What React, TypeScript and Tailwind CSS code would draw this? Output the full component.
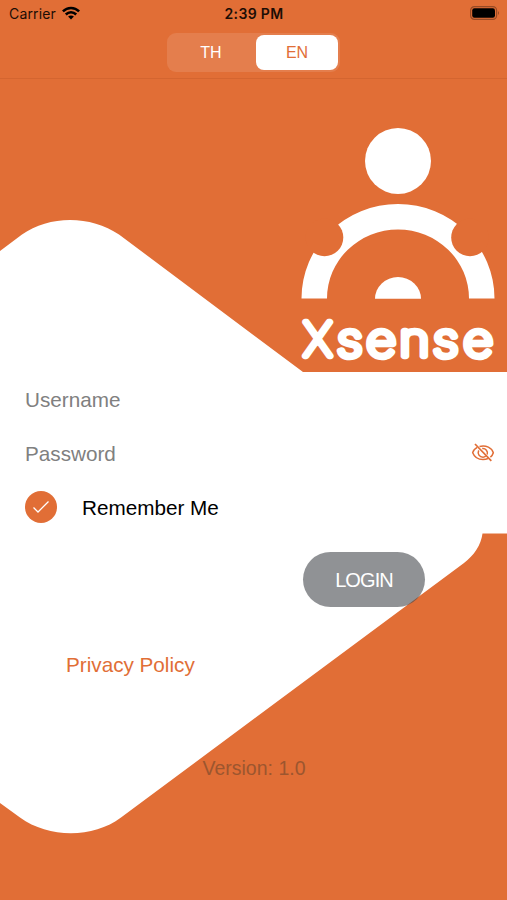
import { useState } from 'react';

type Language = 'TH' | 'EN';

const StatusBar: React.FC = () => {
  return (
    <div className="grid h-[27px] grid-cols-3 items-center pl-[9px] pr-[7px] text-[14px] leading-none text-[#1c0d05]">
      <div className="flex items-center gap-[6px]">
        <span className="font-['Inter',sans-serif] tracking-[0.15px]">Carrier</span>
        <svg className="-mt-px" width="18" height="14" viewBox="0 0 18 14" fill="none" stroke="#000" strokeWidth="2.5">
          <path d="M0.9 5.4C5.5 0.7 12.5 0.7 17.1 5.4" />
          <path d="M3.8 8.5C6.8 5.5 11.2 5.5 14.2 8.5" />
          <path d="M9 13.5L6.1 10.5C7.7 9.1 10.3 9.1 11.9 10.5Z" fill="#000" stroke="none" />
        </svg>
      </div>
      <span className="-ml-px text-center font-['Inter',sans-serif] font-semibold tracking-[0.35px]">2:39 PM</span>
      <svg className="-mt-px justify-self-end" width="30" height="14" viewBox="0 0 30 14">
        <rect x="0.6" y="0.6" width="26" height="12.8" rx="3.8" fill="none" stroke="#984a25" strokeWidth="1.2" />
        <rect x="2.2" y="2.2" width="22.8" height="9.6" rx="2.2" fill="#000" />
        <path d="M28 5Q30 7 28 9Z" fill="#984a25" />
      </svg>
    </div>
  );
};

interface LanguageSwitchProps {
  value: Language;
  onChange: (language: Language) => void;
}

const LanguageSwitch: React.FC<LanguageSwitchProps> = ({ value, onChange }) => {
  const languages: Language[] = ['TH', 'EN'];

  return (
    <div className="mx-auto mt-[6px] flex h-[39px] w-[173px] justify-between rounded-[9px] bg-[#e47e4d] py-[2px] pl-[3px] pr-[2px]">
      {languages.map((language) => (
        <button
          key={language}
          onClick={() => onChange(language)}
          className={`w-[82px] rounded-[8px] pt-[1px] text-[16px] ${
            value === language ? 'bg-white text-[#e16e36]' : 'text-white'
          }`}
        >
          {language}
        </button>
      ))}
    </div>
  );
};

const Background: React.FC = () => {
  return (
    <svg className="absolute inset-0" width="507" height="900" viewBox="0 0 507 900">
      <path
        d="M0 251L22 234.5C49 215 91 215 119 234.5L303 372H507V533.5H482.5C481 545 474 555.500 464 563L121 817.500C93 838.500 49 838.500 20 817.500L0 803Z"
        fill="#fff"
      />
    </svg>
  );
};

const Logo: React.FC = () => {
  return (
    <svg className="overflow-visible" width="200" height="250" viewBox="298 124 200 250" aria-label="Xsense">
      <circle cx="398" cy="161" r="33" fill="#fff" />
      <path d="M301.500 298.500A96.500 94.500 0 0 1 494.500 298.500H469A71 69 0 0 0 327 298.500Z" fill="#fff" />
      <circle cx="324.500" cy="237.500" r="18.800" fill="#e16e36" />
      <circle cx="470" cy="237.500" r="18.800" fill="#e16e36" />
      <path d="M375 298.800A23 21.800 0 0 1 421 298.800Z" fill="#fff" />
      <g
        fill="#fff"
        stroke="#fff"
        strokeWidth="6.4"
        strokeLinejoin="round"
        className="font-['Inter',sans-serif] font-thin"
      >
        <text x="303.500" y="356" className="text-[46px]">
          X
        </text>
        <text
          x="0 25.700 54.300 83.500 110"
          transform="translate(337 356) scale(1.15 1)"
          className="text-[44.500px]"
        >
          sense
        </text>
      </g>
    </svg>
  );
};

const EyeOffIcon: React.FC = () => {
  return (
    <svg width="24" height="20" viewBox="0 0 24 20" fill="none" stroke="#e16e36" strokeWidth="1.5">
      <path d="M6.200 4.300C3.800 5.600 2.200 7.600 1.700 9.700C3.300 13.800 7.200 16.500 12 16.500C13.800 16.500 15.500 16.200 17 15.500" />
      <path d="M8.500 3.400C15 1.700 21 4.900 22.300 9.700C21.800 11.500 20.800 13 19.400 14.100" />
      <path d="M7.700 7.400C6.200 10.800 8.500 14.200 12 14.200C13.100 14.200 14 13.800 14.800 13.200" />
      <path d="M11.200 5.500C14.700 5.100 17.300 8.500 16.200 11.600" />
      <path d="M4 1L20.300 17.800" strokeWidth="1.7" />
    </svg>
  );
};

export default function App() {
  const [language, setLanguage] = useState<Language>('EN');
  const [remember, setRemember] = useState(true);
  const [showPassword, setShowPassword] = useState(false);

  return (
    <div className="relative h-[900px] w-[507px] overflow-hidden bg-[#e16e36] font-['Liberation_Sans',Arial,sans-serif]">
      <Background />
      <div className="relative flex h-full flex-col">
        <header className="h-[79px] border-b border-[#d46530]">
          <StatusBar />
          <LanguageSwitch value={language} onChange={setLanguage} />
        </header>

        <div className="flex justify-end pr-[9px] pt-[45px]">
          <Logo />
        </div>

        <form className="flex flex-col pl-[25px]" onSubmit={(e) => e.preventDefault()}>
          <input
            placeholder="Username"
            className="mt-[6px] h-10 w-[400px] text-[20.700px] outline-none placeholder:text-[#808080]"
          />
          <div className="mt-[14px] flex h-10 items-center justify-between pr-3">
            <input
              type={showPassword ? 'text' : 'password'}
              placeholder="Password"
              className="h-10 w-[400px] text-[20.700px] outline-none placeholder:text-[#808080]"
            />
            <button
              type="button"
              className="mb-[3px]"
              aria-label="Show password"
              onClick={() => setShowPassword(!showPassword)}
            >
              <EyeOffIcon />
            </button>
          </div>
          <button
            type="button"
            className="mt-[17px] flex h-8 items-center gap-[25px] text-[20.700px] text-black"
            onClick={() => setRemember(!remember)}
          >
            <span className="flex size-8 items-center justify-center rounded-full bg-[#e16e36]">
              {remember && (
                <svg width="18" height="14" viewBox="0 0 18 14" fill="none" stroke="#fff" strokeWidth="1.3">
                  <path d="M1.500 7.500L6 12L16.500 1.500" />
                </svg>
              )}
            </span>
            <span className="pt-[2px]">Remember Me</span>
          </button>
          <button
            type="submit"
            className="ml-[278px] mt-[29px] h-[55px] w-[122px] rounded-full bg-[#464a4f]/60 text-[20px] tracking-[-0.900px] text-white"
          >
            LOGIN
          </button>
        </form>

        <a href="#" className="ml-[66px] mt-[43px] self-start text-[20.700px] leading-[30px] text-[#e16e36]">
          Privacy Policy
        </a>
        <p className="mt-[73px] pl-px text-center text-[19.500px] leading-[30px] text-[#9c562f]">Version: 1.0</p>
      </div>
    </div>
  );
}
